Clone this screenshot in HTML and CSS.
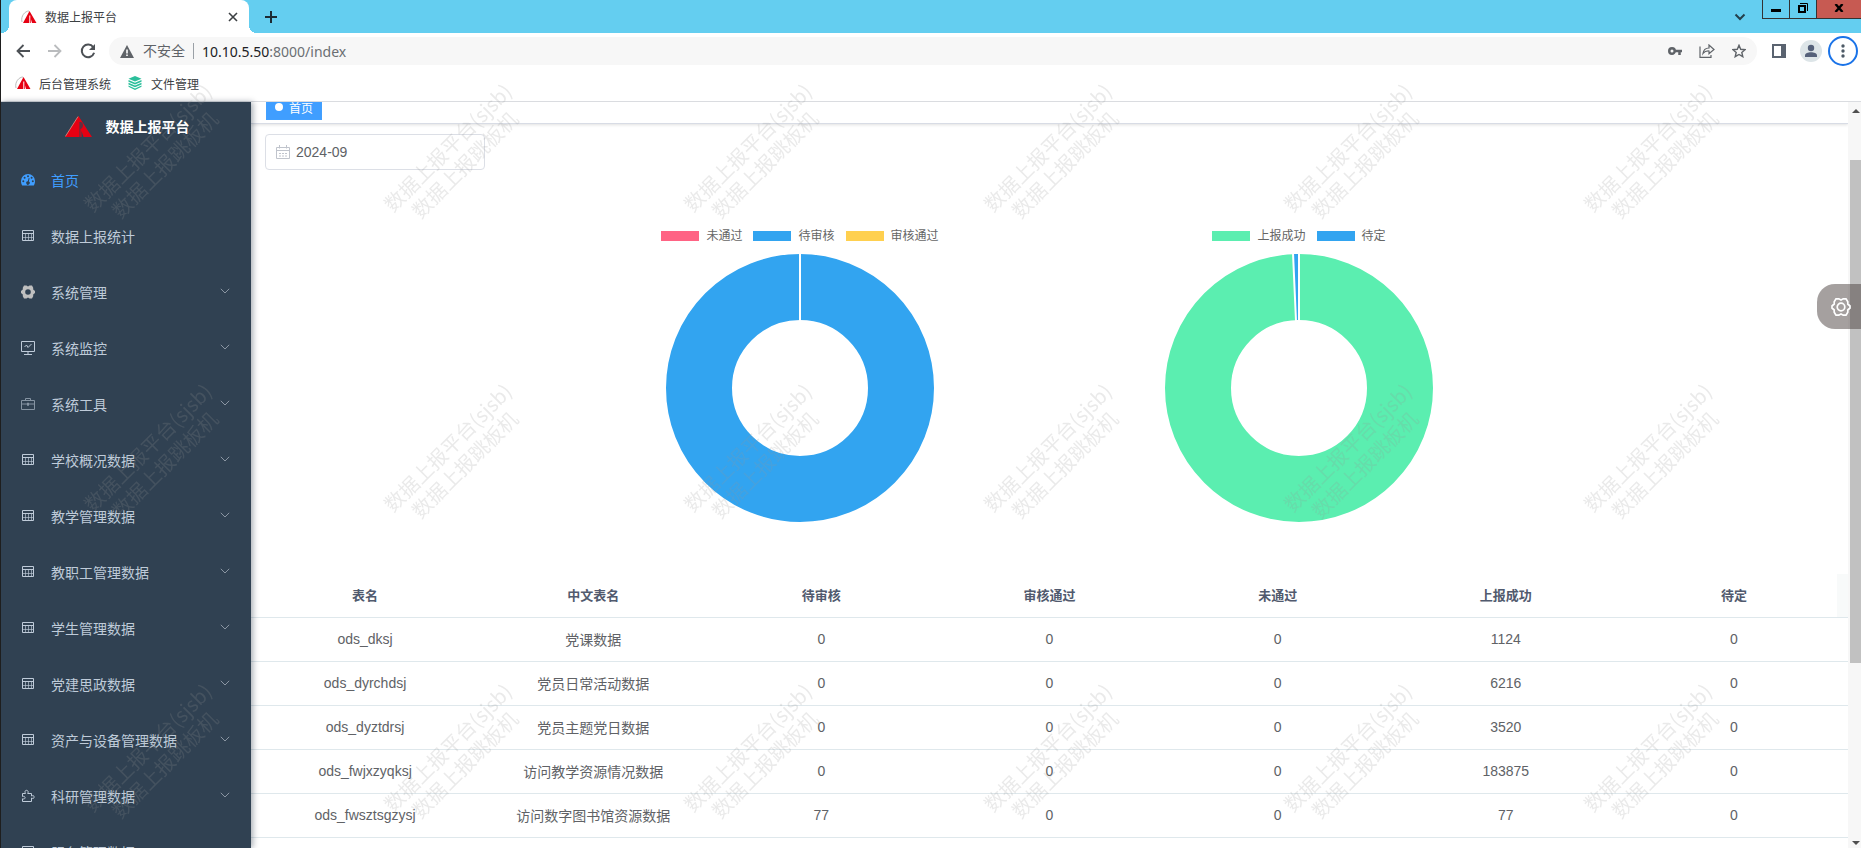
FILE: index.html
```
<!DOCTYPE html>
<html lang="zh-CN">
<head>
  <meta charset="UTF-8" />
  <meta name="viewport" content="width=device-width, initial-scale=1.0"/>
  <title>数据上报平台</title>
  <link rel="stylesheet" href="styles.css">
</head>
<body>
  <svg class="symbols" aria-hidden="true">
    <symbol id="i-logo" viewBox="0 0 27 21">
      <path fill="#e60012" d="M13.5 0 L27 21 H18.5 L16.5 15 V21 H0 Z"/>
      <path fill="#304152" opacity=".75" d="M14.4 6h1.6c2.6.6 2.6 5 .4 6.600l-1 .4v8h-1z"/>
      <path fill="none" stroke="#f0a090" stroke-width=".7" d="M13 .6 L.4 20.400"/>
    </symbol>
    <symbol id="i-mark" viewBox="0 0 16 14">
      <path fill="none" stroke="#bbb" stroke-width="1" d="M1 12C-.5 6 4 1 8 1"/>
      <path fill="#e60012" d="M8.500 1 L15.500 13 H11 L10 9.500 V13 H2 Z"/>
      <path fill="#fff" d="M8.300 5.500h1v7.500h-1z"/>
    </symbol>
    <symbol id="i-dashboard" viewBox="0 0 14 14">
      <path fill="currentColor" d="M7 1a7 7 0 0 0-7 7c0 1.800.5 3.200 1.200 4.500h11.600C13.500 11.200 14 9.800 14 8a7 7 0 0 0-7-7z"/>
      <g fill="#304152"><circle cx="2.300" cy="8.200" r="1"/><circle cx="3.600" cy="4.800" r="1"/><circle cx="7" cy="3.200" r="1"/><circle cx="10.600" cy="4.800" r="1"/><circle cx="11.800" cy="8.200" r="1"/><path d="M8.600 5.200l-.8 3.300a1.700 1.700 0 1 1-1-.2l.9-3.300z"/></g>
    </symbol>
    <symbol id="i-table" viewBox="0 0 14 14">
      <path fill="none" stroke="currentColor" d="M1.500 1.500h11v10h-11zM1.500 4.500h11"/>
      <path fill="none" stroke="currentColor" opacity=".65" d="M4.500 5v6.500M7.500 5v6.500M10.500 5v6.500M2 8.500h10"/>
    </symbol>
    <symbol id="i-gear" viewBox="0 0 14 14">
      <path fill="#bfbfbf" fill-rule="evenodd" d="M3 .5h2.500L7 1.500 8.500.5H11l1.200 2.200V4.500L14 6v2l-1.800 1.500v1.800L11 13.500H8.500L7 12.500l-1.500 1H3l-1.200-2.200V9.500L0 8V6l1.800-1.500V2.700zM7 4.200a2.800 2.800 0 1 0 0 5.600a2.800 2.800 0 1 0 0-5.600z"/>
    </symbol>
    <symbol id="i-monitor" viewBox="0 0 14 14">
      <path fill="none" stroke="currentColor" d="M.5.500h13v10H.500zM7 10.500v3M3 13.500h8M3.500 6l2-2 1.500 2.500 3.500-3.500"/>
    </symbol>
    <symbol id="i-tool" viewBox="0 0 14 14">
      <path fill="none" stroke="currentColor" d="M.5 3.500h13v9H.500zM4.500 3.500v-2h5v2M.5 7h13M6.500 6h1v2.500h-1z"/>
    </symbol>
    <symbol id="i-puzzle" viewBox="0 0 14 14">
      <path fill="none" stroke="currentColor" d="M1.500 4.500h3c-1-1.800-.4-3.200 1-3.200s2.200 1.400 1.200 3.200h3.800V7c1.600-.8 2.700-.2 2.700 1s-1.100 1.900-2.700 1v3.500h-9V9.800c2 .6 2.600-.3 2.600-1.200S3.200 7 1.500 7.500z"/>
    </symbol>
    <symbol id="i-chevron" viewBox="0 0 10 6">
      <path fill="none" stroke="currentColor" d="M.8.800L5 5 9.200.800"/>
    </symbol>
  </svg>

  <header class="browser">
    <div class="tab-strip">
      <div class="tab">
        <svg class="mark"><use href="#i-mark"/></svg>
        <span class="tab-title">数据上报平台</span>
        <button class="plain" aria-label="关闭标签页"><svg width="10" height="10" viewBox="0 0 10 10"><path stroke="#3c4043" stroke-width="1.600" d="M1 1l8 8M9 1L1 9"/></svg></button>
      </div>
      <button class="plain new-tab" aria-label="新标签页"><svg width="12" height="12" viewBox="0 0 12 12"><path stroke="#1c2b33" stroke-width="2" d="M6 0v12M0 6h12"/></svg></button>
      <button class="plain tab-search" aria-label="搜索标签页"><svg width="12" height="8" viewBox="0 0 12 8"><path fill="none" stroke="#24404c" stroke-width="2" d="M1.500 1.500L6 6l4.500-4.500"/></svg></button>
      <div class="window-controls">
        <button aria-label="最小化"><svg width="10" height="10" viewBox="0 0 10 10"><path d="M0 6h10v3H0z"/></svg></button>
        <button aria-label="还原"><svg width="10" height="10" viewBox="0 0 10 10"><path fill="none" stroke="#000" stroke-width="2" d="M1 3h6v6H1z"/><path fill="none" stroke="#000" d="M2 .5h7.500V8"/></svg></button>
        <button class="close" aria-label="关闭"><svg width="10" height="8" viewBox="0 0 10 8"><path stroke="#000" stroke-width="2.400" d="M1.500 0l7 8M8.500 0l-7 8"/></svg></button>
      </div>
    </div>

    <div class="toolbar">
      <button class="plain" aria-label="后退"><svg width="14" height="14" viewBox="0 0 14 14"><path fill="none" stroke="#4d5156" stroke-width="1.800" d="M14 7H1.500M7.500 1l-6 6 6 6"/></svg></button>
      <button class="plain" aria-label="前进"><svg width="14" height="14" viewBox="0 0 14 14"><path fill="none" stroke="#babcbe" stroke-width="1.800" d="M0 7h12.500M6.500 1l6 6-6 6"/></svg></button>
      <button class="plain" aria-label="重新加载"><svg width="16" height="16" viewBox="0 0 16 16"><path fill="none" stroke="#4d5156" stroke-width="2" d="M13.200 4.200A6.300 6.300 0 1 0 14.100 9.800"/><path fill="#4d5156" d="M15 1v6H9z"/></svg></button>
      <div class="omnibox">
        <svg width="14" height="13" viewBox="0 0 14 13"><path fill="#5f6368" d="M7 0l7 13H0z"/><path fill="#fff" d="M6.200 4.500h1.600v4H6.200zM6.200 9.500h1.600v1.600H6.200z"/></svg>
        <span class="insecure">不安全</span>
        <span class="url"><b>10.10.5.50</b>:8000/index</span>
        <div class="omni-icons">
          <svg width="14" height="10" viewBox="0 0 14 10"><path fill="none" stroke="#5f6368" stroke-width="2.500" d="M4 2.200a2.700 2.700 0 1 0 0 5.500a2.700 2.700 0 1 0 0-5.500zM6.500 5H14M11.500 5v4"/></svg>
          <svg width="16" height="14" viewBox="0 0 16 14"><path fill="none" stroke="#5f6368" stroke-width="1.200" d="M1 2.500V13.300h11V11M4 9.500C4.500 5.500 7 4 10 4V1l5 4.500-5 4.200V7C7.500 6.800 5.500 7.500 4 9.500z"/></svg>
          <svg width="14" height="14" viewBox="0 0 14 14"><path fill="none" stroke="#5f6368" stroke-width="1.400" d="M7 1.300l1.700 4 4.300.4-3.200 2.800 1 4.200L7 10.500l-3.800 2.200 1-4.200L1 5.700l4.300-.4z"/></svg>
        </div>
      </div>
      <button class="plain" aria-label="侧边栏"><svg width="14" height="14" viewBox="0 0 14 14"><path fill="#5a6370" fill-rule="evenodd" d="M0 0h14v14H0zM2 2v10h7V2z"/></svg></button>
      <button class="plain avatar" aria-label="用户"><svg width="22" height="22" viewBox="0 0 22 22"><circle cx="11" cy="11" r="11" fill="#dde5e8"/><circle cx="11" cy="8" r="3.200" fill="#55617a"/><path fill="#55617a" d="M5 17v-1.500c0-2 3-3.200 6-3.200s6 1.200 6 3.200V17z"/></svg></button>
      <button class="plain more" aria-label="更多"><svg width="30" height="30" viewBox="0 0 30 30"><circle cx="15" cy="15" r="14" fill="none" stroke="#1a73e8" stroke-width="2"/><g fill="#4d5a66"><circle cx="15" cy="10" r="1.700"/><circle cx="15" cy="15" r="1.700"/><circle cx="15" cy="20" r="1.700"/></g></svg></button>
    </div>

    <nav class="bookmarks">
      <a href="#"><svg class="mark"><use href="#i-mark"/></svg>后台管理系统</a>
      <a href="#"><svg class="mark" viewBox="0 0 14 14"><g fill="#2bbf9b"><path d="M7 0l6.500 2.800L7 5.600.5 2.800z"/><path d="M.5 4L7 6.800 13.500 4v1.700L7 8.500.500 5.700zM.5 6.800L7 9.600l6.500-2.800v1.700L7 11.300.5 8.500zM.5 9.600L7 12.400l6.500-2.800v1.200L7 14 .500 10.800z"/></g></svg>文件管理</a>
    </nav>
  </header>

  <div class="app">
    <aside class="sidebar">
      <div class="sidebar-logo">
        <svg width="27" height="21"><use href="#i-logo"/></svg>
        <h1>数据上报平台</h1>
      </div>
      <nav class="menu">
        <a class="active" href="#"><svg class="icon"><use href="#i-dashboard"/></svg>首页</a>
        <a href="#"><svg class="icon"><use href="#i-table"/></svg>数据上报统计</a>
        <a href="#"><svg class="icon"><use href="#i-gear"/></svg>系统管理<svg class="arrow"><use href="#i-chevron"/></svg></a>
        <a href="#"><svg class="icon"><use href="#i-monitor"/></svg>系统监控<svg class="arrow"><use href="#i-chevron"/></svg></a>
        <a href="#"><svg class="icon dim"><use href="#i-tool"/></svg>系统工具<svg class="arrow"><use href="#i-chevron"/></svg></a>
        <a href="#"><svg class="icon"><use href="#i-table"/></svg>学校概况数据<svg class="arrow"><use href="#i-chevron"/></svg></a>
        <a href="#"><svg class="icon"><use href="#i-table"/></svg>教学管理数据<svg class="arrow"><use href="#i-chevron"/></svg></a>
        <a href="#"><svg class="icon"><use href="#i-table"/></svg>教职工管理数据<svg class="arrow"><use href="#i-chevron"/></svg></a>
        <a href="#"><svg class="icon"><use href="#i-table"/></svg>学生管理数据<svg class="arrow"><use href="#i-chevron"/></svg></a>
        <a href="#"><svg class="icon"><use href="#i-table"/></svg>党建思政数据<svg class="arrow"><use href="#i-chevron"/></svg></a>
        <a href="#"><svg class="icon"><use href="#i-table"/></svg>资产与设备管理数据<svg class="arrow"><use href="#i-chevron"/></svg></a>
        <a href="#"><svg class="icon"><use href="#i-puzzle"/></svg>科研管理数据<svg class="arrow"><use href="#i-chevron"/></svg></a>
        <a href="#"><svg class="icon"><use href="#i-table"/></svg>服务管理数据<svg class="arrow"><use href="#i-chevron"/></svg></a>
      </nav>
    </aside>

    <main class="main">
      <div class="tags-view"><a class="tag" href="#">首页</a></div>

      <div class="content">
        <label class="date-picker">
          <svg width="14" height="14" viewBox="0 0 14 14"><path fill="none" stroke="#c0c4cc" d="M.5 2.500h13v11H.500zM.5 5.500h13M3.500 0v3.500M10.500 0v3.500M3 8.500h2M6 8.500h2M9 8.500h2M3 11h2M6 11h2M9 11h2"/></svg>
          <input type="text" value="2024-09" aria-label="选择月份">
        </label>

        <div class="charts">
          <figure class="chart">
            <figcaption class="legend">
              <span class="pink">未通过</span>
              <span class="blue">待审核</span>
              <span class="yellow">审核通过</span>
            </figcaption>
            <svg width="268" height="268" viewBox="0 0 268 268">
              <circle cx="134" cy="134" r="101" fill="none" stroke="#32a4f0" stroke-width="66"/>
              <path stroke="#fff" stroke-width="2" d="M134 0v68"/>
            </svg>
          </figure>
          <figure class="chart">
            <figcaption class="legend">
              <span class="green">上报成功</span>
              <span class="blue">待定</span>
            </figcaption>
            <svg width="268" height="268" viewBox="0 0 268 268">
              <circle cx="134" cy="134" r="101" fill="none" stroke="#5beeb0" stroke-width="66"/>
              <path fill="#32a4f0" stroke="#fff" stroke-width="2" d="M134 -1v68h-3L128 -1z"/>
            </svg>
          </figure>
        </div>
      </div>

      <table>
        <thead>
          <tr><th>表名</th><th>中文表名</th><th>待审核</th><th>审核通过</th><th>未通过</th><th>上报成功</th><th>待定</th></tr>
        </thead>
        <tbody>
          <tr><td>ods_dksj</td><td>党课数据</td><td>0</td><td>0</td><td>0</td><td>1124</td><td>0</td></tr>
          <tr><td>ods_dyrchdsj</td><td>党员日常活动数据</td><td>0</td><td>0</td><td>0</td><td>6216</td><td>0</td></tr>
          <tr><td>ods_dyztdrsj</td><td>党员主题党日数据</td><td>0</td><td>0</td><td>0</td><td>3520</td><td>0</td></tr>
          <tr><td>ods_fwjxzyqksj</td><td>访问教学资源情况数据</td><td>0</td><td>0</td><td>0</td><td>183875</td><td>0</td></tr>
          <tr><td>ods_fwsztsgzysj</td><td>访问数字图书馆资源数据</td><td>77</td><td>0</td><td>0</td><td>77</td><td>0</td></tr>
        </tbody>
      </table>
    </main>

    <div class="scrollbar" aria-hidden="true">
      <svg width="8" height="4" viewBox="0 0 8 4"><path fill="#505050" d="M4 0l4 4H0z"/></svg>
      <div class="track"><div class="thumb"></div></div>
      <svg width="8" height="4" viewBox="0 0 8 4"><path fill="#505050" d="M4 4l4-4H0z"/></svg>
    </div>
  </div>

  <button class="settings" aria-label="布局设置">
    <svg width="20" height="20" viewBox="0 0 20 20"><g fill="none" stroke="#fff" stroke-width="1.700"><path d="M5 1.800h2.800L10 3l2.200-1.200H15l1.800 3V7L19 9v2l-2.200 2v2.200l-1.800 3h-2.800L10 17l-2.200 1.200H5l-1.800-3V13L1 11V9l2.200-2V4.800z"/><circle cx="10" cy="10" r="3.800"/></g></svg>
  </button>

  <div class="watermark" id="watermark" aria-hidden="true"></div>

  <script>
    const watermark = document.getElementById("watermark");
    // only whole tiles across, the last row may run past the bottom
    const cols = Math.floor(window.innerWidth / 300);
    const rows = Math.ceil(window.innerHeight / 300);

    for (let i = 0; i < cols * rows; i++) {
      const cell = document.createElement("div");
      cell.innerHTML = "<p>数据上报平台(sjsb)<br>数据上报跳板机</p>";
      watermark.appendChild(cell);
    }
    watermark.style.gridTemplateColumns = `repeat(${cols}, 300px)`;
  </script>
</body>
</html>
```
FILE: styles.css
```
* {
  box-sizing: border-box;
}

body {
  margin: 0;
  height: 100vh;
  display: flex;
  flex-direction: column;
  overflow: hidden;
  background: #fff;
  border-left: 1px solid #1e1e1e;
  font-family: "Liberation Sans", "Noto Sans CJK SC", sans-serif;
  font-size: 14px;
  color: #606266;
}

a {
  color: inherit;
  text-decoration: none;
}

svg {
  display: block;
  flex: none;
}

.symbols {
  position: absolute;
  width: 0;
  height: 0;
}

.plain {
  padding: 0;
  border: none;
  background: none;
}

/* browser */
.browser {
  flex: none;
  border-bottom: 1px solid #dadce0;
}

.tab-strip {
  display: flex;
  height: 33px;
  padding-left: 8px;
  background: #64cef0;
}

.tab {
  position: relative;
  display: flex;
  align-items: center;
  width: 240px;
  padding: 0 11px 0 12px;
  background: #fff;
  border-radius: 8px 8px 0 0;
  font-size: 12px;
  color: #3c4043;
}

.tab::before,
.tab::after {
  content: "";
  position: absolute;
  bottom: 0;
  width: 8px;
  height: 8px;
}

.tab::before {
  left: -8px;
  background: radial-gradient(circle at 0 0, transparent 8px, #fff 8px);
}

.tab::after {
  right: -8px;
  background: radial-gradient(circle at 100% 0, transparent 8px, #fff 8px);
}

.mark {
  width: 16px;
  height: 14px;
}

.tab-title {
  flex: 1;
  margin-left: 8px;
}

.new-tab {
  margin-left: 16px;
}

.tab-search {
  margin-left: auto;
}

.window-controls {
  display: flex;
  height: 19px;
  margin-left: 16px;
  border: solid #333;
  border-width: 0 0 1px 1px;
}

.window-controls button {
  display: flex;
  align-items: center;
  justify-content: center;
  width: 27px;
  padding: 0 0 2px;
  border: none;
  border-right: 1px solid #333;
  background: none;
}

.window-controls .close {
  width: 44px;
  border-right: none;
  background: #c75a52;
}

.toolbar {
  display: flex;
  align-items: center;
  height: 36px;
  padding: 0 3px 0 15px;
  gap: 18px;
}

.omnibox {
  flex: 1;
  display: flex;
  align-items: center;
  height: 28px;
  margin-left: -5px;
  margin-right: -3px;
  padding: 0 11px;
  border-radius: 14px;
  background: #f7f7f7;
}

.insecure {
  margin-left: 9px;
  padding-right: 8px;
  border-right: 1px solid #9aa0a6;
  line-height: 16px;
  color: #5f6368;
}

.url {
  margin-left: 8px;
  font-family: "Noto Sans", sans-serif;
  color: #6b6f73;
}

.url b {
  font-weight: 400;
  color: #202124;
}

.omni-icons {
  display: flex;
  align-items: center;
  gap: 17px;
  margin-left: auto;
}

.avatar {
  margin-left: -4px;
}

.more {
  margin-left: -12px;
}

.bookmarks {
  display: flex;
  align-items: center;
  height: 32px;
  padding: 0 14px 4px;
  gap: 16px;
  font-size: 12px;
  color: #3c4043;
}

.bookmarks a {
  display: flex;
  align-items: center;
  gap: 8px;
}

/* layout */
.app {
  flex: 1;
  display: flex;
  min-height: 0;
}

.sidebar {
  position: relative;
  flex: none;
  width: 250px;
  overflow: hidden;
  background: #304152;
  color: #bfcbd9;
  box-shadow: 2px 0 6px rgba(0, 21, 41, .35);
}

.sidebar-logo {
  display: flex;
  align-items: center;
  justify-content: center;
  height: 50px;
  padding: 0 0 2px 2px;
  gap: 14px;
}

.sidebar-logo h1 {
  margin: 0;
  font-size: 14px;
  color: #fff;
}

.menu a {
  display: flex;
  align-items: center;
  height: 56px;
  padding: 0 21px 0 20px;
}

.menu .active {
  color: #409eff;
}

.icon {
  width: 14px;
  height: 14px;
  margin-right: 16px;
}

.dim {
  opacity: .6;
}

.arrow {
  width: 10px;
  height: 6px;
  margin-bottom: 2px;
  margin-left: auto;
  color: #8b96a3;
}

.main {
  flex: 1;
  min-width: 0;
  overflow: hidden;
}

.tags-view {
  display: flex;
  align-items: flex-end;
  height: 22px;
  padding: 0 15px 3px;
  border-bottom: 1px solid #d8dce5;
  box-shadow: 0 1px 3px rgba(0, 0, 0, .12);
}

.tag {
  display: flex;
  align-items: center;
  gap: 6px;
  height: 26px;
  padding: 0 8px;
  border: 1px solid #42a0ff;
  background: #409eff;
  font-size: 12px;
  color: #fff;
}

.tag::before {
  content: "";
  width: 8px;
  height: 8px;
  border-radius: 50%;
  background: #fff;
}

.content {
  padding: 10px 14px 52px;
}

.date-picker {
  display: flex;
  align-items: center;
  width: 220px;
  height: 36px;
  padding: 0 10px;
  gap: 6px;
  border: 1px solid #dcdfe6;
  border-radius: 4px;
}

.date-picker input {
  flex: 1;
  min-width: 0;
  padding: 0;
  border: none;
  outline: none;
  background: none;
  font: inherit;
  color: inherit;
}

/* charts */
.charts {
  display: flex;
  justify-content: center;
  margin-top: 57px;
}

.chart {
  display: flex;
  flex-direction: column;
  align-items: center;
  width: 499px;
  margin: 0;
  gap: 9px;
}

.legend {
  display: flex;
  gap: 11px;
  font-size: 12px;
  line-height: 18px;
  color: #666;
}

.legend span {
  display: flex;
  align-items: center;
  gap: 7px;
}

.legend span::before {
  content: "";
  width: 38px;
  height: 10px;
}

.pink::before { background: #ff6384; }
.blue::before { background: #32a4f0; }
.yellow::before { background: #ffd04f; }
.green::before { background: #5beeb0; }

/* table */
table {
  width: 100%;
  table-layout: fixed;
  border-collapse: separate;
  border-spacing: 0;
  text-align: center;
}

thead {
  background: linear-gradient(to left, #f8fafa 11px, transparent 11px);
}

th,
td {
  height: 44px;
  padding: 0 0 2px;
  border-bottom: 1px solid #dfe8ec;
}

th {
  font-size: 13px;
  color: #515a6e;
}

.scrollbar {
  flex: none;
  display: flex;
  flex-direction: column;
  align-items: center;
  width: 13px;
  padding: 7px 0 3px 2px;
  background: #f7f7f7;
}

.track {
  flex: 1;
  display: flex;
  flex-direction: column;
  width: 100%;
  padding: 8px 0;
}

.track::before {
  content: "";
  flex: 39;
}

.track::after {
  content: "";
  flex: 170;
}

.thumb {
  flex: 503;
  background: #c1c1c1;
}

.settings {
  position: fixed;
  top: 284px;
  right: 0;
  display: flex;
  align-items: center;
  width: 44px;
  height: 45px;
  padding: 0 0 0 14px;
  border: none;
  border-radius: 18px 0 0 18px;
  background: rgba(75, 66, 64, .5);
}

.watermark {
  position: fixed;
  top: 6px;
  left: 6px;
  display: grid;
  grid-auto-rows: 300px;
  pointer-events: none;
  font-family: "Noto Sans CJK SC", sans-serif;
  font-size: 20px;
  line-height: 24px;
  text-align: center;
  color: rgba(150, 150, 150, .2);
}

.watermark div {
  display: flex;
  align-items: center;
  justify-content: center;
}

.watermark p {
  margin: 0;
  white-space: nowrap;
  transform: rotate(-45deg);
}
```
